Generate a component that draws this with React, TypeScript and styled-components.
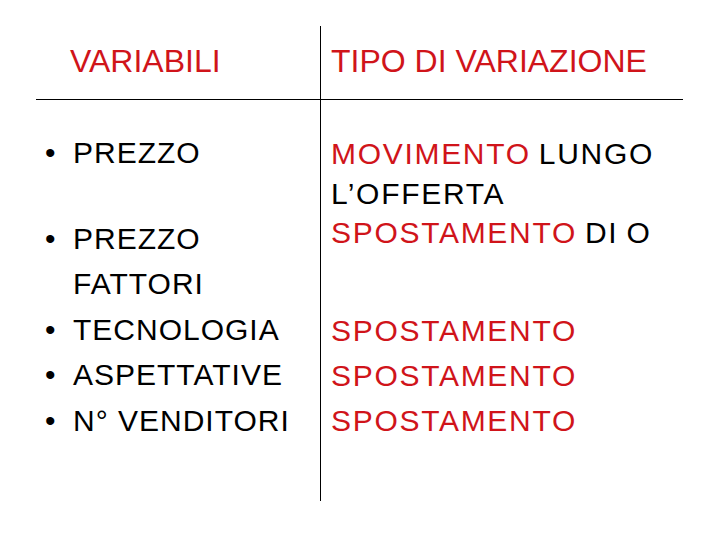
import React from 'react'
import styled, { createGlobalStyle } from 'styled-components';

const GlobalStyle = createGlobalStyle`
    html, body {
        margin: 0;
        padding: 0;
        background: #ffffff;
    }
    body {
        font-family: "Liberation Sans", Arial, sans-serif;
        color: #000000;
    }
`;

const RED = '#d0141a';

// left column: [text lines of each bullet], gap before each bullet
const variabili = [
    { lines: ["PREZZO"], gap: 0 },
    { lines: ["PREZZO", "FATTORI"], gap: 40 },
    { lines: ["TECNOLOGIA"], gap: 0 },
    { lines: ["ASPETTATIVE"], gap: 0 },
    { lines: ["N° VENDITORI"], gap: 0 },
];

const App = () => {
    return (
        <>
            <GlobalStyle />
            <Slide>
                <Table>
                    <HeadCell>
                        <HeadText>VARIABILI</HeadText>
                    </HeadCell>
                    <HeadCell divided>
                        <HeadText>TIPO DI VARIAZIONE</HeadText>
                    </HeadCell>

                    <BodyCell>
                        {variabili.map((item, index) => (
                            <Item key={"V" + index} gap={item.gap}>
                                <Bullet>•</Bullet>
                                <ItemText>
                                    {item.lines.map((line, i) => (
                                        <div key={"VL" + index + i}>{line}</div>
                                    ))}
                                </ItemText>
                            </Item>
                        ))}
                    </BodyCell>

                    <BodyCell divided>
                        <Group top={34} lineHeight={39.5}>
                            <div><Red>MOVIMENTO</Red> LUNGO</div>
                            <div>L’OFFERTA</div>
                            <div><Red>SPOSTAMENTO</Red> DI O</div>
                        </Group>
                        <Group top={55} lineHeight={45}>
                            <Red>SPOSTAMENTO</Red>
                            <Red>SPOSTAMENTO</Red>
                            <Red>SPOSTAMENTO</Red>
                        </Group>
                    </BodyCell>
                </Table>
            </Slide>
        </>
    )
};

const Slide = styled.div`
    width: 720px;
    height: 540px;
    box-sizing: border-box;
    padding: 26px 0 0 36px;
`;

const Table = styled.div`
    display: grid;
    grid-template-columns: 284px 363px;
    grid-template-rows: 74px 401px;
`;

const HeadCell = styled.div<{ divided?: boolean }>`
    box-sizing: border-box;
    border-bottom: 1px solid #000;
    border-left: ${p => p.divided ? '1px solid #000' : 'none'};
    padding-top: 15px;
    padding-left: ${p => p.divided ? '10px' : '34px'};
`;

const HeadText = styled.div`
    font-size: 32px;
    line-height: 40px;
    color: ${RED};
    white-space: nowrap;
`;

const BodyCell = styled.div<{ divided?: boolean }>`
    box-sizing: border-box;
    border-left: ${p => p.divided ? '1px solid #000' : 'none'};
    padding-top: ${p => p.divided ? '0' : '30px'};
    padding-left: ${p => p.divided ? '10px' : '9px'};
    font-size: 30px;
    letter-spacing: ${p => p.divided ? '1.7px' : '1px'};
    word-spacing: ${p => p.divided ? '-2px' : '0'};
    white-space: nowrap;
`;

const Item = styled.div<{ gap: number }>`
    display: flex;
    margin-top: ${p => p.gap}px;
    line-height: 45.6px;
`;

const Bullet = styled.span`
    width: 28px;
    flex: none;
    letter-spacing: 0;
`;

const ItemText = styled.div`
    display: flex;
    flex-direction: column;
`;

const Group = styled.div<{ top: number; lineHeight: number }>`
    display: flex;
    flex-direction: column;
    margin-top: ${p => p.top}px;
    line-height: ${p => p.lineHeight}px;
`;

const Red = styled.span`
    color: ${RED};
`;

export default App
